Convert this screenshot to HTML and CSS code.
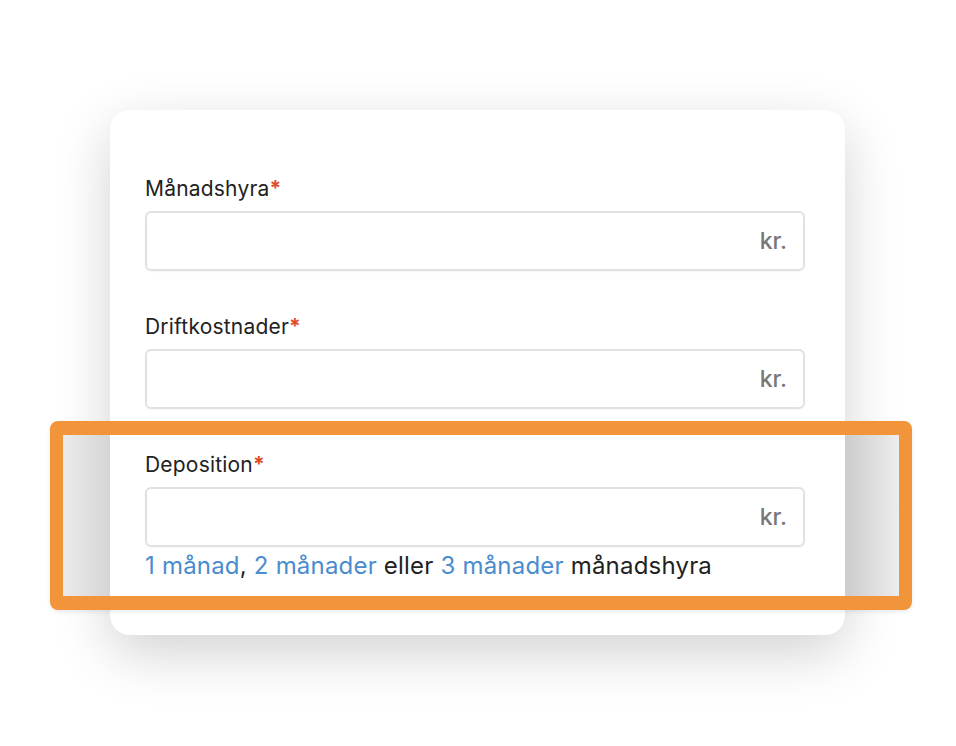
FILE: index.html
```html
<!DOCTYPE html>
<html lang="sv">

<head>
  <meta charset="UTF-8">
  <meta name="viewport" content="width=device-width, initial-scale=1.0">
  <title>Hyra</title>
  <link rel="stylesheet" href="styles.css">
</head>

<body>
  <div class="page">
    <div class="card">
      <div class="form-group">
        <label for="rent">Månadshyra<span class="req">*</span></label>
        <div class="field">
          <input type="text" id="rent">
          <span class="unit">kr.</span>
        </div>
      </div>
      <div class="form-group">
        <label for="costs">Driftkostnader<span class="req">*</span></label>
        <div class="field">
          <input type="text" id="costs">
          <span class="unit">kr.</span>
        </div>
      </div>
      <div class="form-group last">
        <label for="deposit">Deposition<span class="req">*</span></label>
        <div class="field">
          <input type="text" id="deposit">
          <span class="unit">kr.</span>
        </div>
        <p class="hint"><a href="#">1 månad</a>, <a href="#">2 månader</a> eller <a href="#">3 månader</a> månadshyra</p>
      </div>
    </div>
    <div class="highlight"></div>
  </div>
</body>

</html>
```

FILE: styles.css
```css
body {
  margin: 0;
  background: #fff;
  font-family: Inter, "Liberation Sans", Arial, sans-serif;
  color: #222;
}

.page {
  position: relative;
  width: 956px;
  height: 746px;
  padding: 110px 0 0 110px;
  box-sizing: border-box;
}

.card {
  width: 735px;
  height: 525px;
  box-sizing: border-box;
  padding: 65px 40px 0 35px;
  background: #fff;
  border-radius: 20px;
  box-shadow: 0 18px 55px rgba(0, 0, 0, 0.18);
}

.form-group {
  margin-bottom: 42px;
}

.form-group.last {
  margin-bottom: 0;
}

label {
  display: block;
  font-size: 21px;
  line-height: 28px;
  letter-spacing: 0.2px;
  margin-bottom: 8px;
}

.req {
  color: #e04a26;
  font-weight: bold;
}

.field {
  display: flex;
  align-items: center;
  height: 60px;
  box-sizing: border-box;
  border: 2px solid #e1e1e1;
  border-radius: 6px;
  padding: 0 16px 0 14px;
  box-shadow: 0 1px 2px rgba(0, 0, 0, 0.04);
}

.field input {
  flex: 1;
  border: none;
  outline: none;
  font: inherit;
  font-size: 22px;
  background: transparent;
}

.unit {
  color: #777;
  font-size: 23px;
  font-weight: 500;
}

.hint {
  margin: 4px 0 0;
  font-size: 24px;
  line-height: 30px;
  letter-spacing: 0.2px;
}

.hint a {
  color: #4a8cce;
  text-decoration: none;
}

.highlight {
  position: absolute;
  left: 50px;
  top: 421px;
  width: 862px;
  height: 189px;
  box-sizing: border-box;
  border: 13px solid #f2943a;
  border-top-width: 14px;
  border-bottom-width: 14px;
  border-radius: 8px;
  background: linear-gradient(to right, #ebebeb 0, #d5d5d5 47px, transparent 47px, transparent 782px, #cccccc 782px, #ededed 100%);
  box-shadow: 0 2px 4px rgba(0, 0, 0, 0.08);
}
```
